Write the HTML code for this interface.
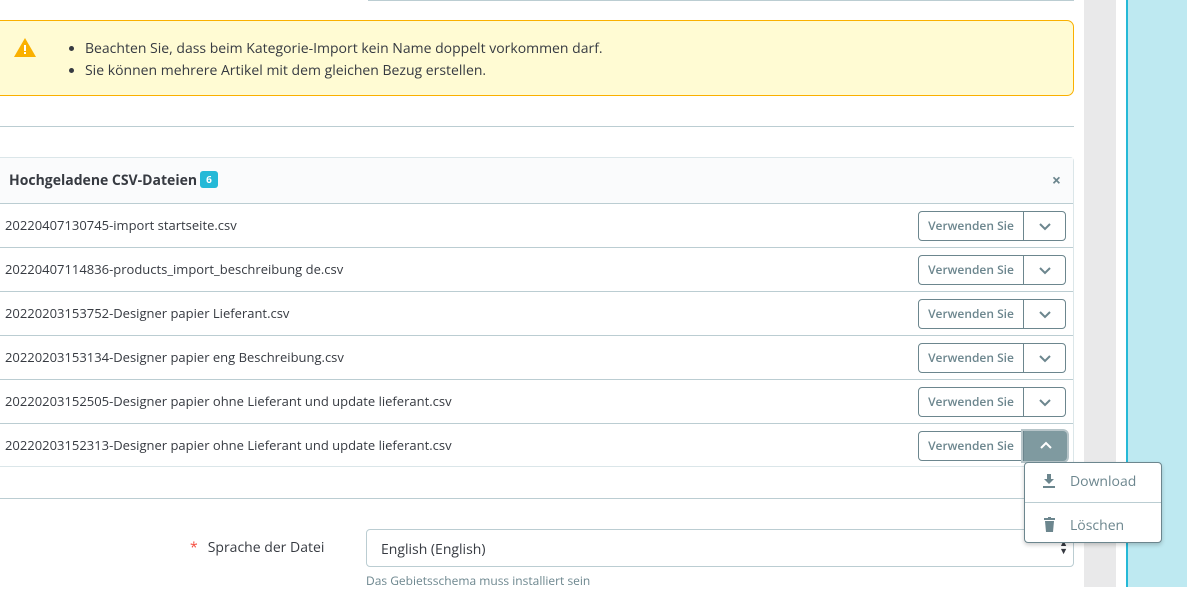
<!DOCTYPE html>
<html><head><meta charset="utf-8"><style>
*{box-sizing:border-box;margin:0;padding:0}
body{width:1187px;height:587px;overflow:hidden;background:#fff;font-family:"Open Sans","Liberation Sans",sans-serif;color:#363a41;position:relative;font-size:13px}
.abs{position:absolute}
.grey{left:1084px;top:0;width:32px;height:587px;background:#e9e9ea}
.cyan{left:1126px;top:0;width:61px;height:587px;background:#bee9f1;border-left:2px solid #25b9d7}
.alert{left:-10px;top:20px;width:1084px;height:76px;background:#fffbd3;border:1px solid #fab000;border-radius:7px}
.alert ul{position:absolute;left:94px;top:17px;font-size:14px;line-height:22px;color:#363a41}
.hr{height:1px;background:#bbcdd2}
.panel{left:-4px;top:157px;width:1078px;height:310px;border:1px solid #dbe6e9;border-radius:4px}
.ph{height:46px;background:#fafbfc;border-bottom:1px solid #bbcdd2;padding:13px 12px;font-weight:bold;font-size:14px}
.badge{display:inline-block;background:#25b9d7;color:#fff;font-size:10px;padding:1px 6px;border-radius:3px;margin-left:3px;vertical-align:2px;line-height:15px}
.row{height:44px;border-bottom:1px solid #bbcdd2;position:relative;font-size:13px;line-height:43px;padding-left:8px}
.row:last-child{border-bottom:none}
.btn{position:absolute;left:921px;top:7px;width:148px;height:30px;border:1px solid #6c868e;border-radius:4px;font-size:12px;font-weight:600;color:#6c868e;line-height:28px}
.btn span{position:absolute;left:0;width:104px;text-align:center}
.btn i{position:absolute;left:104px;top:0;width:43px;height:28px;border-left:1px solid #6c868e}
.btn.open i{background:#7f9aa0;top:-1px;height:30px;width:44px;border-radius:0 4px 4px 0;box-shadow:0 0 0 2px #b7c5c9}
.dd{left:1024px;top:462px;width:138px;height:81px;background:#fff;border:1px solid #6c868e;border-radius:4px;box-shadow:0 2px 4px rgba(0,0,0,.2);font-size:14px;color:#6c868e}
</style></head><body>
<div class="abs hr" style="left:368px;top:0;width:706px"></div>
<div class="abs alert">
<svg class="abs" style="left:23px;top:17px" width="22" height="19" viewBox="0 0 22 19"><path d="M11 0L22 19H0z" fill="#fab000"/><rect x="10" y="7" width="2" height="6" fill="#fff"/><rect x="10" y="14" width="2" height="2" fill="#fff"/></svg>
<ul><li>Beachten Sie, dass beim Kategorie-Import kein Name doppelt vorkommen darf.</li><li>Sie können mehrere Artikel mit dem gleichen Bezug erstellen.</li></ul>
</div>
<div class="abs hr" style="left:0;top:126px;width:1074px"></div>
<div class="abs panel">
<div class="ph">Hochgeladene CSV-Dateien<span class="badge">6</span><span style="position:absolute;right:12px;top:11px;color:#6c868e;font-size:16px">×</span></div>
<div class="row">20220407130745-import startseite.csv<div class="btn"><span>Verwenden Sie</span><i><svg width="43" height="28"><path d="M16 12l5 5 5-5" stroke="#6c868e" stroke-width="2" fill="none"/></svg></i></div></div>
<div class="row">20220407114836-products_import_beschreibung de.csv<div class="btn"><span>Verwenden Sie</span><i><svg width="43" height="28"><path d="M16 12l5 5 5-5" stroke="#6c868e" stroke-width="2" fill="none"/></svg></i></div></div>
<div class="row">20220203153752-Designer papier Lieferant.csv<div class="btn"><span>Verwenden Sie</span><i><svg width="43" height="28"><path d="M16 12l5 5 5-5" stroke="#6c868e" stroke-width="2" fill="none"/></svg></i></div></div>
<div class="row">20220203153134-Designer papier eng Beschreibung.csv<div class="btn"><span>Verwenden Sie</span><i><svg width="43" height="28"><path d="M16 12l5 5 5-5" stroke="#6c868e" stroke-width="2" fill="none"/></svg></i></div></div>
<div class="row">20220203152505-Designer papier ohne Lieferant und update lieferant.csv<div class="btn"><span>Verwenden Sie</span><i><svg width="43" height="28"><path d="M16 12l5 5 5-5" stroke="#6c868e" stroke-width="2" fill="none"/></svg></i></div></div>
<div class="row">20220203152313-Designer papier ohne Lieferant und update lieferant.csv<div class="btn open"><span>Verwenden Sie</span><i><svg width="44" height="30"><path d="M17 17l5-5 5 5" stroke="#fff" stroke-width="2" fill="none"/></svg></i></div></div>
</div>
<div class="abs hr" style="left:0;top:498px;width:1074px"></div>
<div class="abs" style="left:190px;top:538px;font-size:14px"><span style="color:#f54c3e;margin-right:10px">*</span>Sprache der Datei</div>
<div class="abs" style="left:366px;top:529px;width:708px;height:38px;border:1px solid #bbcdd2;border-radius:4px;padding:10px 14px;font-size:14px">English (English)<span style="position:absolute;right:5px;top:9px;font-size:9px;line-height:8px">▲<br>▼</span></div>
<div class="abs" style="left:366px;top:572px;font-size:12px;color:#6c868e">Das Gebietsschema muss installiert sein</div>
<div class="abs grey"></div>
<div class="abs cyan"></div>
<div class="abs dd">
<svg class="abs" style="left:18px;top:11px" width="12" height="15" viewBox="0 0 12 15"><path d="M4 0h4v5h3L6 10 1 5h3z" fill="#6c868e"/><rect x="0" y="12" width="12" height="2" fill="#6c868e"/></svg>
<div class="abs" style="left:45px;top:9px">Download</div>
<div class="abs hr" style="left:0;top:39px;width:136px"></div>
<svg class="abs" style="left:19px;top:54px" width="11" height="15" viewBox="0 0 11 15"><rect x="0" y="1" width="11" height="2" fill="#6c868e"/><rect x="4" y="0" width="3" height="2" fill="#6c868e"/><path d="M1 4h9l-1 11H2z" fill="#6c868e"/></svg>
<div class="abs" style="left:45px;top:53px">Löschen</div>
</div>
</body></html>
